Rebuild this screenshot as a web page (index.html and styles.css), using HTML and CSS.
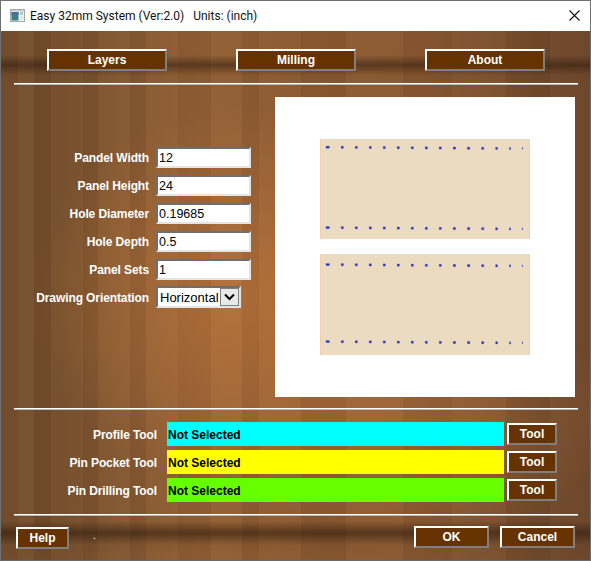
FILE: index.html
```html
<!DOCTYPE html>
<html lang="en">
<head>
    <meta charset="UTF-8">
    <title>Easy 32mm System</title>
    <link rel="stylesheet" href="styles.css">
</head>
<body>

<div class="window">

    <!-- Title bar -->
    <div class="titlebar">
        <svg class="app-icon" width="15" height="13" viewBox="0 0 15 13">
            <rect x="0.5" y="0.5" width="14" height="12" fill="#f0f2f2" stroke="#a3a8a8"/>
            <rect x="1" y="1" width="13" height="1.5" fill="#c6cbcc"/>
            <rect x="1.5" y="3" width="7" height="8.5" fill="#3d7f86"/>
            <rect x="1.5" y="3" width="7" height="3" fill="#4a6f9c"/>
            <rect x="10" y="3" width="3" height="3" fill="#a9d0b4"/>
            <rect x="10" y="7" width="3" height="4" fill="#dfe4e4"/>
        </svg>
        <span class="title">Easy 32mm System (Ver:2.0)&nbsp;&nbsp; Units: (inch)</span>
        <svg class="close-icon" width="11" height="11" viewBox="0 0 11 11">
            <path d="M0.5 0.5L10.5 10.5M10.5 0.5L0.5 10.5" stroke="#111" stroke-width="1.1" fill="none"/>
        </svg>
    </div>

    <div class="wood">

        <!-- Top buttons -->
        <div class="nav">
            <button class="btn btn-nav">Layers</button>
            <button class="btn btn-nav">Milling</button>
            <button class="btn btn-nav">About</button>
        </div>

        <div class="line line-top"></div>

        <div class="main">
            <!-- Panel settings -->
            <div class="form">
                <div class="form-row">
                    <label class="form-label">Pandel Width</label>
                    <input class="field" type="text" value="12">
                </div>
                <div class="form-row">
                    <label class="form-label">Panel Height</label>
                    <input class="field" type="text" value="24">
                </div>
                <div class="form-row">
                    <label class="form-label">Hole Diameter</label>
                    <input class="field" type="text" value="0.19685">
                </div>
                <div class="form-row">
                    <label class="form-label">Hole Depth</label>
                    <input class="field" type="text" value="0.5">
                </div>
                <div class="form-row">
                    <label class="form-label">Panel Sets</label>
                    <input class="field" type="text" value="1">
                </div>
                <div class="form-row">
                    <label class="form-label">Drawing Orientation</label>
                    <div class="combo">
                        <select class="combo-select">
                            <option>Horizontal</option>
                            <option>Vertical</option>
                        </select>
                        <span class="combo-arrow">
                            <svg width="11" height="8" viewBox="0 0 11 8">
                                <path d="M1 1.5L5.5 6L10 1.5" stroke="#000" stroke-width="2" fill="none"/>
                            </svg>
                        </span>
                    </div>
                </div>
            </div>

            <!-- Drawing preview -->
            <svg class="preview" width="300" height="300" viewBox="275 97 300 300">
                <defs>
                    <g id="holes" fill="#2b2fc6" stroke="#3b3fc4" stroke-opacity="0.3" stroke-width="0.8">
                        <rect x="326" y="-0.8" width="3.4" height="2"/>
                        <rect x="341.2" y="-0.8" width="2.2" height="2.2"/>
                        <rect x="355.2" y="-0.7" width="2.2" height="2.2"/>
                        <rect x="369.2" y="-0.6" width="2.2" height="2.2"/>
                        <rect x="383.2" y="-0.5" width="2.2" height="2.2"/>
                        <rect x="397.2" y="-0.4" width="2.2" height="2.2"/>
                        <rect x="411.2" y="-0.3" width="2.2" height="2.2"/>
                        <rect x="425.2" y="-0.2" width="2.2" height="2.2"/>
                        <rect x="439.2" y="-0.1" width="2.2" height="2.2"/>
                        <rect x="453.2" y="0" width="2.4" height="2.2"/>
                        <rect x="467.4" y="0.1" width="2.4" height="2.2"/>
                        <rect x="481.6" y="0.2" width="2.2" height="2.2"/>
                        <rect x="495.6" y="0.3" width="2" height="2.2"/>
                        <rect x="509.4" y="0.4" width="1.2" height="2.2"/>
                        <rect x="522" y="0.6" width="0.7" height="1.6"/>
                    </g>
                </defs>
                <rect x="320" y="139" width="210" height="100" fill="#ebdcc1"/>
                <rect x="320" y="139" width="1" height="100" fill="#f6cfa9"/>
                <rect x="529" y="139" width="1" height="100" fill="#f6cfa9"/>
                <rect x="320" y="254" width="210" height="101" fill="#ebdcc1"/>
                <rect x="320" y="254" width="1" height="101" fill="#f6cfa9"/>
                <rect x="529" y="254" width="1" height="101" fill="#f6cfa9"/>
                <use href="#holes" y="147"/>
                <use href="#holes" y="227.4"/>
                <use href="#holes" y="264.4"/>
                <use href="#holes" y="341.4"/>
            </svg>
        </div>

        <div class="line line-mid"></div>

        <!-- Tool selection -->
        <div class="tools">
            <div class="tool-row">
                <span class="tool-label">Profile Tool</span>
                <span class="tool-name cyan">Not Selected</span>
                <button class="btn btn-tool">Tool</button>
            </div>
            <div class="tool-row">
                <span class="tool-label">Pin Pocket Tool</span>
                <span class="tool-name yellow">Not Selected</span>
                <button class="btn btn-tool">Tool</button>
            </div>
            <div class="tool-row">
                <span class="tool-label">Pin Drilling Tool</span>
                <span class="tool-name green">Not Selected</span>
                <button class="btn btn-tool">Tool</button>
            </div>
        </div>

        <div class="line line-bottom"></div>

        <!-- Bottom buttons -->
        <div class="footer">
            <button class="btn btn-help">Help</button>
            <span class="status">.</span>
            <button class="btn btn-ok">OK</button>
            <button class="btn btn-ok">Cancel</button>
        </div>

    </div>
</div>

</body>
</html>
```
FILE: styles.css
```css
* {
    box-sizing: border-box;
}

body {
    margin: 0;
    width: 591px;
    height: 561px;
    overflow: hidden;
    font-family: "Liberation Sans", Arial, sans-serif;
    font-size: 12px;
}

.window {
    display: flex;
    flex-direction: column;
    width: 591px;
    height: 561px;
    border: 1px solid #707070;
    border-bottom-color: #6a6a6a;
}

/* Title bar */
.titlebar {
    display: flex;
    align-items: center;
    height: 30px;
    padding: 0 10px 0 9px;
    background-color: #fff;
}

.app-icon {
    flex: none;
    margin-right: 5px;
    margin-bottom: 1px;
}

.title {
    flex: 1;
    font-family: Roboto, sans-serif;
    font-size: 12px;
    color: #111;
}

.close-icon {
    flex: none;
    margin-bottom: 2px;
}

/* Wood background, drawn in layers */
.wood {
    flex: 1;
    padding-top: 18px;
    background-color: #84552f;
    background-image:
        linear-gradient(180deg,
            rgba(40, 22, 8, 0) 24px,
            rgba(40, 22, 8, 0.5) 34px,
            rgba(40, 22, 8, 0.05) 44px,
            rgba(40, 22, 8, 0) 52px,
            rgba(40, 22, 8, 0) 490px,
            rgba(40, 22, 8, 0.55) 502px,
            rgba(40, 22, 8, 0.05) 514px,
            rgba(40, 22, 8, 0) 529px),
        linear-gradient(90deg,
            rgba(60, 30, 10, 0.06) 0 17px,
            rgba(255, 190, 120, 0.03) 17px 33px,
            rgba(60, 30, 10, 0.10) 33px 50px,
            rgba(255, 190, 120, 0.02) 50px 82px,
            rgba(60, 30, 10, 0.05) 82px 97px,
            rgba(255, 190, 120, 0.04) 97px 129px,
            rgba(60, 30, 10, 0.07) 129px 145px,
            rgba(255, 190, 120, 0.03) 145px 177px,
            rgba(60, 30, 10, 0.03) 177px 210px,
            rgba(255, 190, 120, 0.05) 210px 241px,
            rgba(60, 30, 10, 0.05) 241px 258px,
            rgba(255, 190, 120, 0.03) 258px 300px,
            rgba(60, 30, 10, 0.06) 300px 345px,
            rgba(255, 190, 120, 0.04) 345px 402px,
            rgba(60, 30, 10, 0.05) 402px 451px,
            rgba(255, 190, 120, 0.02) 451px 505px,
            rgba(60, 30, 10, 0.08) 505px 549px,
            rgba(255, 190, 120, 0.02) 549px 591px),
        radial-gradient(ellipse 210px 190px at 240px 265px, rgba(200, 124, 60, 0.6), rgba(200, 124, 60, 0)),
        radial-gradient(ellipse 220px 120px at 400px 385px, rgba(176, 110, 60, 0.5), rgba(176, 110, 60, 0)),
        linear-gradient(90deg,
            #75502f 0,
            #744e2d 60px,
            #7d5430 105px,
            #885a33 150px,
            #8e5d34 200px,
            #8c5b33 260px,
            #895932 320px,
            #875731 420px,
            #7b502e 500px,
            #704a2c 545px,
            #6b452a 591px);
}

/* Buttons */
.btn {
    padding: 0;
    border-style: solid;
    border-width: 2px;
    border-color: #fff #7f7f7f #7f7f7f #fff;
    background-color: #663300;
    color: #fff;
    font-family: "Liberation Sans", Arial, sans-serif;
    font-size: 12px;
    font-weight: bold;
    cursor: pointer;
}

.nav {
    display: flex;
    gap: 69px;
    padding-left: 46px;
}

.btn-nav {
    width: 120px;
    height: 22px;
}

.line {
    height: 2px;
    margin-left: 13px;
    margin-right: 12px;
    background-color: #fff;
    border-bottom: 1px solid #b9b9b9;
}

.line-top {
    margin-top: 12px;
}

.line-mid {
    margin-top: 11px;
}

.line-bottom {
    margin-top: 12px;
}

/* Middle part */
.main {
    display: flex;
    margin-top: 12px;
    padding-left: 155px;
}

.form {
    display: flex;
    flex-direction: column;
    gap: 7px;
    width: 119px;
    padding-top: 50px;
}

.form-row {
    position: relative;
    height: 21px;
}

.form-label {
    position: absolute;
    right: 100%;
    top: 4px;
    margin-right: 7px;
    color: #fff;
    font-size: 12px;
    letter-spacing: -0.1px;
    font-weight: bold;
    white-space: nowrap;
}

.field {
    display: block;
    width: 95px;
    height: 21px;
    padding: 1px 0 0 1px;
    border-style: solid;
    border-width: 2px;
    border-color: #6e6e6e #e4e4e4 #e4e4e4 #6e6e6e;
    background-color: #fff;
    color: #000;
    font-family: "Liberation Sans", Arial, sans-serif;
    font-size: 12.5px;
    outline: none;
}

.combo {
    display: flex;
    width: 85px;
    height: 22px;
    margin-top: -1px;
    border-style: solid;
    border-width: 2px;
    border-color: #6e6e6e #e4e4e4 #e4e4e4 #6e6e6e;
    background-color: #fff;
}

.combo-select {
    flex: 1;
    min-width: 0;
    padding: 0 0 0 2px;
    border: none;
    background: none;
    appearance: none;
    color: #000;
    font-family: "Liberation Sans", Arial, sans-serif;
    font-size: 13px;
    outline: none;
}

.combo-arrow {
    display: flex;
    flex: none;
    align-items: center;
    justify-content: center;
    width: 19px;
    border: 1px solid #808080;
    background-color: #e9e9e9;
}

.preview {
    flex: none;
    display: block;
    background-color: #fff;
}

/* Tools */
.tools {
    display: flex;
    flex-direction: column;
    gap: 4px;
    margin-top: 12px;
}

.tool-row {
    display: flex;
    align-items: center;
    height: 24px;
}

.tool-label {
    width: 156px;
    padding-top: 1px;
    color: #fff;
    font-size: 12px;
    letter-spacing: -0.1px;
    font-weight: bold;
    text-align: right;
}

.tool-name {
    width: 337px;
    height: 24px;
    margin-left: 10px;
    padding-left: 1px;
    color: #000;
    font-weight: bold;
    line-height: 26px;
}

.cyan {
    background-color: #00ffff;
}

.yellow {
    background-color: #ffff00;
}

.green {
    background-color: #66ff00;
}

.btn-tool {
    width: 50px;
    height: 22px;
    margin-left: 3px;
}

/* Bottom bar */
.footer {
    display: flex;
    align-items: flex-start;
    gap: 11px;
    margin-top: 10px;
    padding: 0 15px;
}

.btn-help {
    width: 53px;
    height: 22px;
    margin-top: 1px;
}

.status {
    margin: 4px auto 0 13px;
    color: #fff;
    font-size: 10px;
}

.btn-ok {
    width: 75px;
    height: 22px;
}
```
